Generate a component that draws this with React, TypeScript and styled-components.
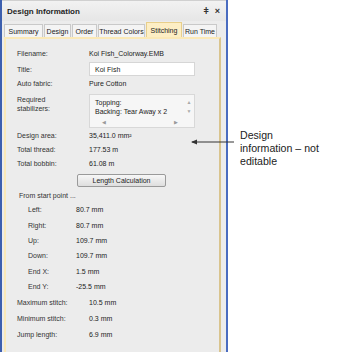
import React from 'react';
import styled, { createGlobalStyle } from 'styled-components';

const GlobalStyle = createGlobalStyle`
  body {
    margin: 0;
    background: #ffffff;
    font-family: "Liberation Sans", Arial, sans-serif;
  }
`

const Page = styled.div`
  position: relative;
  width: 342px;
  height: 358px;
  overflow: hidden;
`

const Panel = styled.div`
  display: flex;
  flex-direction: column;
  width: 228px;
  height: 352px;
  border-left: 2px solid #3d5fae;
  border-right: 2px solid #4a6cc0;
  background: #ececec;
  box-sizing: border-box;
`

const TitleBar = styled.div`
  display: flex;
  align-items: center;
  justify-content: space-between;
  height: 21px;
  padding: 0 6px 0 5px;
  background: linear-gradient(#f2f2f2, #e6e6e6);
  border-top: 1px solid #d0d0d0;
  box-sizing: border-box;
`

const Title = styled.span`
  font-size: 8px;
  font-weight: 700;
  color: #1e1e1e;
`

const TitleIcons = styled.div`
  display: flex;
  gap: 6px;
  align-items: center;
  color: #333;
  font-size: 9px;
  font-weight: 700;
`

const TabRow = styled.div`
  display: flex;
  align-items: flex-end;
  height: 15px;
  padding-left: 2px;
  margin-top: 1px;
`

const Tab = styled.div<{ $active?: boolean; $w: number }>`
  display: flex;
  align-items: center;
  justify-content: center;
  width: ${p => p.$w}px;
  height: ${p => (p.$active ? 15 : 13)}px;
  font-size: 7px;
  white-space: nowrap;
  color: #222;
  background: ${p => (p.$active ? '#fdeec4' : '#f4f4f4')};
  border: 1px solid ${p => (p.$active ? '#e8cf8a' : '#c9c9c9')};
  border-bottom: none;
  margin-right: 1px;
  box-sizing: border-box;
`

const Content = styled.div`
  flex: 1;
  margin: 0 5px 0 2px;
  border-left: 2px solid #fbe9b7;
  border-right: 2px solid #d9c48e;
  border-top: 2px solid #fbe9b7;
  padding: 6px 0 0 11px;
  display: flex;
  flex-direction: column;
`

const Row = styled.div<{ $h?: number; $indent?: number }>`
  display: flex;
  align-items: center;
  box-sizing: border-box;
  height: ${p => p.$h ?? 15}px;
  padding-left: ${p => p.$indent ?? 0}px;
  font-size: 7px;
  color: #333;
  flex-shrink: 0;
`

const TopRow = styled(Row)`
  align-items: flex-start;
  padding-top: 5px;
`

const Label = styled.div<{ $w?: number; $top?: number }>`
  width: ${p => p.$w ?? 72}px;
  flex-shrink: 0;
  line-height: 9px;
  padding-top: ${p => p.$top ?? 0}px;
`

const Value = styled.div`
  color: #222;
`

const TextBox = styled.div`
  width: 106px;
  height: 14px;
  background: #fff;
  border: 1px solid #d6d6d6;
  padding-left: 5px;
  display: flex;
  align-items: center;
  box-sizing: border-box;
  font-size: 7px;
  color: #222;
`

const StabBox = styled.div`
  position: relative;
  width: 106px;
  height: 34px;
  background: #f6f6f6;
  border: 1px solid #d8d8d8;
  box-sizing: border-box;
  padding: 3px 0 0 5px;
  font-size: 7px;
  line-height: 9px;
  color: #222;
`

const ScrollV = styled.div`
  position: absolute;
  right: 0;
  top: 0;
  bottom: 9px;
  width: 10px;
  display: flex;
  flex-direction: column;
  justify-content: space-between;
  align-items: center;
  padding: 3px 0;
  box-sizing: border-box;
  font-size: 5px;
  color: #aaa;
`

const ScrollH = styled.div`
  position: absolute;
  left: 0;
  right: 10px;
  bottom: 0;
  height: 9px;
  display: flex;
  justify-content: space-between;
  align-items: center;
  padding: 0 6px 0 12px;
  font-size: 5px;
  color: #999;
`

const Button = styled.div`
  width: 89px;
  height: 13px;
  margin: 4px 0 2px 60px;
  display: flex;
  align-items: center;
  justify-content: center;
  flex-shrink: 0;
  font-size: 7px;
  color: #222;
  background: linear-gradient(#f7f7f7, #dedede);
  border: 1px solid #9a9a9a;
  border-radius: 2px;
  box-sizing: border-box;
`

const Note = styled.div`
  position: absolute;
  left: 240px;
  top: 129px;
  font-size: 10.6px;
  line-height: 13px;
  color: #222;
`

const Arrow = styled.svg`
  position: absolute;
  left: 190px;
  top: 138px;
`

const measures = [
  ['Left:', '80.7 mm'],
  ['Right:', '80.7 mm'],
  ['Up:', '109.7 mm'],
  ['Down:', '109.7 mm'],
  ['End X:', '1.5 mm'],
  ['End Y:', '-25.5 mm'],
]

const stitches = [
  ['Maximum stitch:', '10.5 mm'],
  ['Minimum stitch:', '0.3 mm'],
  ['Jump length:', '6.9 mm'],
]

export default function App() {
  return (
    <Page>
      <GlobalStyle />
      <Panel>
        <TitleBar>
          <Title>Design Information</Title>
          <TitleIcons>
            <span>ǂ</span>
            <span>×</span>
          </TitleIcons>
        </TitleBar>
        <TabRow>
          <Tab $w={39}>Summary</Tab>
          <Tab $w={27}>Design</Tab>
          <Tab $w={25}>Order</Tab>
          <Tab $w={47}>Thread Colors</Tab>
          <Tab $w={36} $active>Stitching</Tab>
          <Tab $w={34}>Run Time</Tab>
        </TabRow>
        <Content>
          <Row $h={16}>
            <Label>Filename:</Label>
            <Value>Koi Fish_Colorway.EMB</Value>
          </Row>
          <Row $h={16}>
            <Label>Title:</Label>
            <TextBox>Koi Fish</TextBox>
          </Row>
          <Row $h={12}>
            <Label>Auto fabric:</Label>
            <Value>Pure Cotton</Value>
          </Row>
          <TopRow $h={39}>
            <Label $top={1}>Required<br />stabilizers:</Label>
            <StabBox>
              Topping:<br />Backing: Tear Away x 2
              <ScrollV><span>▲</span><span>▼</span></ScrollV>
              <ScrollH><span>◀</span><span>▶</span></ScrollH>
            </StabBox>
          </TopRow>
          <Row $h={14}>
            <Label>Design area:</Label>
            <Value>35,411.0 mm²</Value>
          </Row>
          <Row $h={14}>
            <Label>Total thread:</Label>
            <Value>177.53 m</Value>
          </Row>
          <Row $h={14}>
            <Label>Total bobbin:</Label>
            <Value>61.08 m</Value>
          </Row>
          <Button>Length Calculation</Button>
          <Row $h={13} $indent={2}>From start point ...</Row>
          {measures.map(([k, v]) => (
            <Row key={k} $h={15.4} $indent={11}>
              <Label $w={48}>{k}</Label>
              <Value>{v}</Value>
            </Row>
          ))}
          {stitches.map(([k, v]) => (
            <Row key={k} $h={16}>
              <Label>{k}</Label>
              <Value>{v}</Value>
            </Row>
          ))}
        </Content>
      </Panel>
      <Arrow width="46" height="8" viewBox="0 0 46 8">
        <path d="M2 4 H44" stroke="#333" strokeWidth="1" />
        <path d="M1 4 L7 1.5 L7 6.5 Z" fill="#333" />
      </Arrow>
      <Note>
        Design<br />information – not<br />editable
      </Note>
    </Page>
  )
}
